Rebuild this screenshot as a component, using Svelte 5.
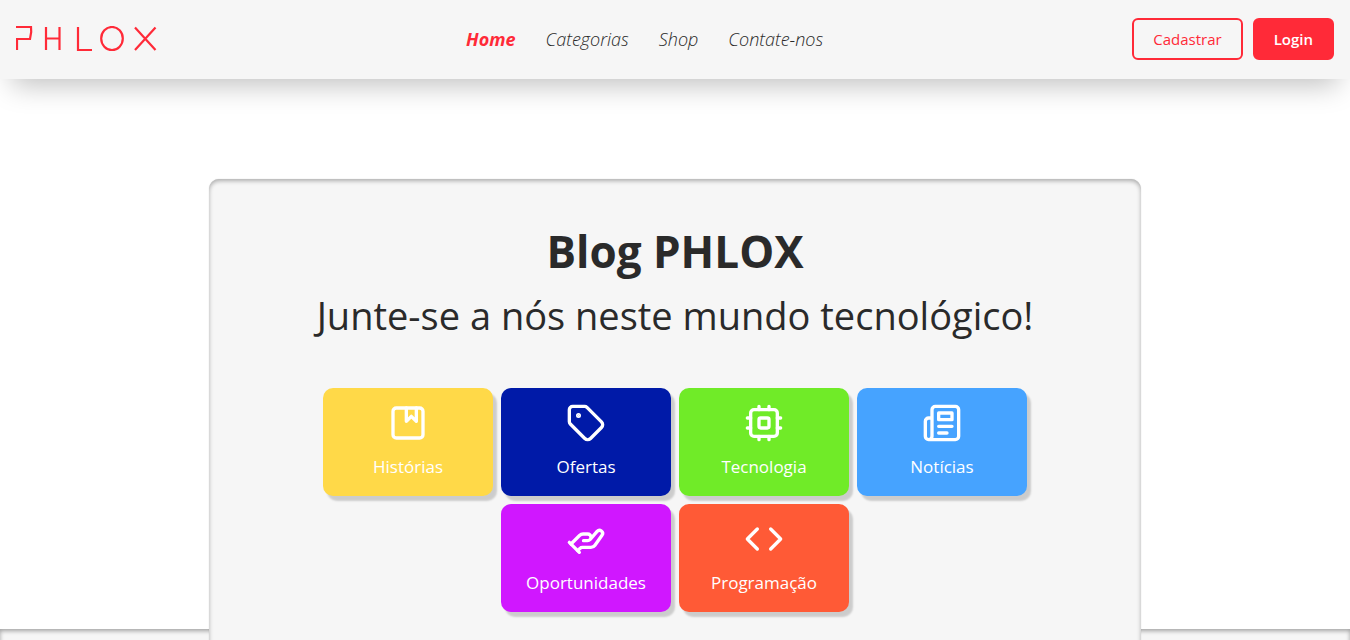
<script>
  const links = [
    { label: 'Home', href: '#home', active: true },
    { label: 'Categorias', href: '#categorias' },
    { label: 'Shop', href: '#shop' },
    { label: 'Contate-nos', href: '#contato' }
  ];
  const categories = [
    { name: 'Histórias', icon: 'album', tone: 'yellow' },
    { name: 'Ofertas', icon: 'tag', tone: 'navy' },
    { name: 'Tecnologia', icon: 'chip', tone: 'green' },
    { name: 'Notícias', icon: 'news', tone: 'sky' },
    { name: 'Oportunidades', icon: 'hand', tone: 'violet' },
    { name: 'Programação', icon: 'code', tone: 'orange' }
  ];
</script>

<header class="bar">
  <a class="logo" href="#home" aria-label="PHLOX">
    <svg width="141" height="26" viewBox="0 0 141 26" fill="none" stroke="currentColor" stroke-width="2.200" aria-hidden="true">
      <polyline points="0,1 15,1 15.2,6 14,13 1,13 1,24" />
      <path d="M30 1V24M43.500 1V24M30 12.500H43.500" />
      <polyline points="62,1 62,24 76,24" />
      <ellipse cx="96" cy="12.500" rx="10.800" ry="11.500" />
      <path d="M119 1.500L139.500 24M139.500 1.500L119 24" />
    </svg>
  </a>
  <nav aria-label="Principal">
    {#each links as link}
      <a href={link.href} class:active={link.active}>{link.label}</a>
    {/each}
  </nav>
  <div class="actions">
    <button class="outline" type="button">Cadastrar</button>
    <button class="solid" type="button">Login</button>
  </div>
</header>

<main>
  <section class="intro">
    <h1>Blog PHLOX</h1>
    <p>Junte-se a nós neste mundo tecnológico!</p>
    <div class="categories">
      {#each categories as item}
        <a class="category {item.tone}" href="#{item.icon}">
          <svg width="40" height="40" viewBox="0 0 24 24" fill="none" stroke="currentColor" stroke-width="2" stroke-linecap="round" stroke-linejoin="round" aria-hidden="true">
            {#if item.icon === 'album'}
              <rect x="3" y="3" width="18" height="18" rx="2" />
              <polyline points="11 3 11 11 14 8 17 11 17 3" />
            {:else if item.icon === 'tag'}
              <path d="M12.586 2.586A2 2 0 0 0 11.172 2H4a2 2 0 0 0-2 2v7.172a2 2 0 0 0 .586 1.414l8.704 8.704a2.426 2.426 0 0 0 3.420 0l6.580-6.580a2.426 2.426 0 0 0 0-3.420z" />
              <circle cx="7.500" cy="7.500" r=".5" fill="currentColor" />
            {:else if item.icon === 'chip'}
              <rect x="4" y="4" width="16" height="16" rx="2" />
              <rect x="9" y="9" width="6" height="6" rx="1" />
              <path d="M15 2v2M15 20v2M2 15h2M2 9h2M20 15h2M20 9h2M9 2v2M9 20v2" />
            {:else if item.icon === 'news'}
              <path d="M4 22h16a2 2 0 0 0 2-2V4a2 2 0 0 0-2-2H8a2 2 0 0 0-2 2v16a2 2 0 0 1-2 2Zm0 0a2 2 0 0 1-2-2v-9c0-1.100.9-2 2-2h2" />
              <path d="M18 14h-8M15 18h-5M10 6h8v4h-8V6Z" />
            {:else if item.icon === 'hand'}
              <path d="m3 15 5.120-5.120A3 3 0 0 1 10.240 9H13a2 2 0 1 1 0 4h-2.500m4-.68 4.170-4.890a1.880 1.880 0 0 1 2.920 2.360l-4.200 5.940A3 3 0 0 1 14.960 17H9.830a2 2 0 0 0-1.420.590L7 19" />
              <path d="m2 14 6 6" />
            {:else}
              <polyline points="16 18 22 12 16 6" />
              <polyline points="8 6 2 12 8 18" />
            {/if}
          </svg>
          <span>{item.name}</span>
        </a>
      {/each}
    </div>
  </section>
  <section class="posts" aria-label="Publicações"></section>
</main>

<style>
  :global(body) {
    margin: 0;
    background: #fff;
    color: #2a2a2a;
    font-family: 'Segoe UI', 'Open Sans', 'Noto Sans', sans-serif;
  }
  .bar {
    display: flex;
    align-items: center;
    justify-content: space-between;
    box-sizing: border-box;
    min-height: 79px;
    padding: 18px 16px 19px;
    background: #f6f6f6;
    box-shadow: 0 18px 28px -12px rgba(0, 0, 0, 0.25);
  }
  .logo {
    display: flex;
    color: #ff2a38;
  }
  nav {
    display: flex;
    gap: 30px;
  }
  nav a {
    color: #2a2a2a;
    font-size: 18px;
    font-style: italic;
    font-weight: 300;
    line-height: 24px;
    text-decoration: none;
  }
  nav a.active {
    color: #ff2a38;
    font-weight: 700;
  }
  .actions {
    display: flex;
    gap: 10px;
  }
  button {
    height: 42px;
    padding: 0 19px;
    border: 2px solid #ff2a38;
    border-radius: 6px;
    font-family: inherit;
    font-size: 15px;
    font-weight: 600;
    cursor: pointer;
  }
  .outline {
    background: transparent;
    color: #ff2a38;
    font-weight: 500;
  }
  .solid {
    background: #ff2a38;
    color: #fff;
  }
  main {
    padding-top: 100px;
  }
  .intro {
    position: relative;
    box-sizing: border-box;
    width: 69%;
    margin: 0 auto -43px;
    padding: 40px 80px 60px;
    border-radius: 10px;
    background: #f6f6f6;
    box-shadow: inset 0 2px 4px rgba(0, 0, 0, 0.3), 0 0 1px rgba(0, 0, 0, 0.25);
    text-align: center;
  }
  h1 {
    margin: 0;
    font-size: 44px;
    font-weight: 700;
    line-height: 64px;
  }
  p {
    margin: 0 0 41px;
    font-size: 38px;
    font-weight: 400;
    line-height: 64px;
  }
  .categories {
    display: flex;
    flex-wrap: wrap;
    justify-content: center;
    gap: 8px;
  }
  .category {
    display: flex;
    flex-direction: column;
    align-items: center;
    gap: 12px;
    box-sizing: border-box;
    width: 170px;
    padding: 15px 8px 17px;
    border-radius: 10px;
    box-shadow: 4px 5px 2px rgba(0, 0, 0, 0.17);
    color: #fff;
    font-size: 17px;
    line-height: 24px;
    text-decoration: none;
  }
  .yellow { background: #ffd948; }
  .navy { background: #001aa8; }
  .green { background: #70eb28; }
  .sky { background: #46a3ff; }
  .violet { background: #d017ff; }
  .orange { background: #ff5a36; }
  .posts {
    min-height: 240px;
    background: #f6f6f6;
    box-shadow: inset 0 2px 4px rgba(0, 0, 0, 0.35);
  }
</style>
